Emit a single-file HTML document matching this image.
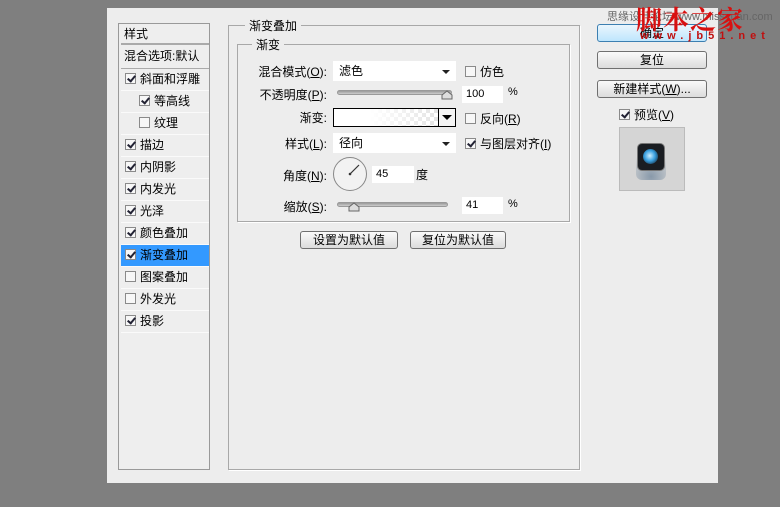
<!DOCTYPE html>
<html><head><meta charset="utf-8"><style>
*{margin:0;padding:0;box-sizing:border-box}
body{width:780px;height:507px;background:#7f7f7f;position:relative;overflow:hidden;font-family:"Liberation Sans","Noto Sans CJK SC",sans-serif;font-size:12px;color:#000}
.a{position:absolute}
.dlg{left:107px;top:8px;width:611px;height:475px;background:#ededed}
.lp{left:118px;top:23px;width:92px;height:447px;border:1px solid #999;background:#eeeeee}
.row{position:absolute;left:2px;width:88px;height:22px;line-height:21px;border-bottom:1px solid #fafafa;font-size:12px}
.cb{display:inline-block;width:11px;height:11px;border:1px solid #8a8a8a;background:#f7f7f7;vertical-align:-1px;margin-right:4px;position:relative}
.cb.on::after{content:"";position:absolute;left:3px;top:0px;width:3px;height:6px;border:solid #223;border-width:0 2px 2px 0;transform:rotate(40deg)}
.grp{border:1px solid #a8a8a8;box-shadow:1px 1px 0 #fff}
.gt{position:absolute;background:#ededed;padding:0 4px;font-size:12px}
.lbl{position:absolute;text-align:right;width:90px;font-size:12px}
.dd{position:absolute;background:#fff;height:20px;line-height:20px;padding-left:6px}
.dd::after{content:"";position:absolute;right:6px;top:9px;border:4px solid transparent;border-top:4px solid #222}
.inp{position:absolute;background:#fff;height:17px;line-height:17px;padding-left:4px;font-size:11px}
.sl{position:absolute;height:5px;border-radius:3px;background:linear-gradient(#999,#ccc);border:1px solid #999}
.th{position:absolute;width:10px;height:9px;}
.btn{position:absolute;height:18px;border:1px solid #707070;border-radius:3px;background:linear-gradient(#fafafa,#dcdcdc);text-align:center;line-height:16px;font-size:12px}
</style></head><body>
<div class="a dlg"></div>
<div class="a lp">
<div class="row" style="top:0;height:21px;border-bottom:2px solid #aaa;padding-left:3px">样式</div>
<div class="row" style="top:22px;height:23px;border-bottom:1px solid #aaa;padding-left:3px">混合选项:默认</div>
<div class="row" style="top:45px;padding-left:4px"><span class="cb on"></span>斜面和浮雕</div>
<div class="row" style="top:67px;padding-left:18px"><span class="cb on"></span>等高线</div>
<div class="row" style="top:89px;padding-left:18px"><span class="cb"></span>纹理</div>
<div class="row" style="top:111px;padding-left:4px"><span class="cb on"></span>描边</div>
<div class="row" style="top:133px;padding-left:4px"><span class="cb on"></span>内阴影</div>
<div class="row" style="top:155px;padding-left:4px"><span class="cb on"></span>内发光</div>
<div class="row" style="top:177px;padding-left:4px"><span class="cb on"></span>光泽</div>
<div class="row" style="top:199px;padding-left:4px"><span class="cb on"></span>颜色叠加</div>
<div class="row" style="top:221px;padding-left:4px;background:#3399ff"><span class="cb on"></span>渐变叠加</div>
<div class="row" style="top:243px;padding-left:4px"><span class="cb"></span>图案叠加</div>
<div class="row" style="top:265px;padding-left:4px"><span class="cb"></span>外发光</div>
<div class="row" style="top:287px;padding-left:4px"><span class="cb on"></span>投影</div>
</div>
<div class="a grp" style="left:228px;top:25px;width:352px;height:445px"></div>
<div class="gt" style="left:245px;top:17px">渐变叠加</div>
<div class="a grp" style="left:237px;top:44px;width:333px;height:178px"></div>
<div class="gt" style="left:252px;top:36px">渐变</div>
<div class="lbl" style="left:237px;top:63px">混合模式(<u>O</u>):</div>
<div class="dd" style="left:333px;top:61px;width:123px">滤色</div>
<div class="a" style="left:465px;top:63px"><span class="cb"></span>仿色</div>
<div class="lbl" style="left:237px;top:86px">不透明度(<u>P</u>):</div>
<div class="sl" style="left:337px;top:90px;width:115px"></div>
<svg class="a" style="left:441px;top:90px" width="12" height="10"><path d="M1 9V5L6 1L11 5V9Z" fill="#ddd" stroke="#666"/></svg>
<div class="inp" style="left:462px;top:86px;width:41px">100</div>
<div class="a" style="left:508px;top:86px;font-size:11px">%</div>
<div class="lbl" style="left:237px;top:109px">渐变:</div>
<div class="a" style="left:333px;top:108px;width:123px;height:19px;border:1px solid #000;background:linear-gradient(90deg,#fff 30%,rgba(255,255,255,0)),repeating-conic-gradient(#ddd 0 25%,#fff 0 50%) 0 0/8px 8px"></div>
<div class="a" style="left:438px;top:108px;width:18px;height:19px;border:1px solid #000;background:#f4f4f4"></div>
<div class="a" style="left:442px;top:115px;border:5px solid transparent;border-top:5px solid #000"></div>
<div class="a" style="left:465px;top:110px"><span class="cb"></span>反向(<u>R</u>)</div>
<div class="lbl" style="left:237px;top:135px">样式(<u>L</u>):</div>
<div class="dd" style="left:333px;top:133px;width:123px">径向</div>
<div class="a" style="left:465px;top:135px"><span class="cb on"></span>与图层对齐(<u>I</u>)</div>
<div class="lbl" style="left:237px;top:167px">角度(<u>N</u>):</div>
<svg class="a" style="left:332px;top:156px" width="36" height="36"><circle cx="18" cy="18" r="16.5" fill="#f2f2f2" stroke="#888"/><line x1="18" y1="18" x2="27" y2="9" stroke="#333" stroke-width="1.2"/><circle cx="18" cy="18" r="1.3" fill="#333"/></svg>
<div class="inp" style="left:372px;top:166px;width:42px">45</div>
<div class="a" style="left:416px;top:166px">度</div>
<div class="lbl" style="left:237px;top:198px">缩放(<u>S</u>):</div>
<div class="sl" style="left:337px;top:202px;width:111px"></div>
<svg class="a" style="left:348px;top:202px" width="12" height="10"><path d="M1 9V5L6 1L11 5V9Z" fill="#ddd" stroke="#666"/></svg>
<div class="inp" style="left:462px;top:197px;width:41px">41</div>
<div class="a" style="left:508px;top:198px;font-size:11px">%</div>
<div class="btn" style="left:300px;top:231px;width:98px">设置为默认值</div>
<div class="btn" style="left:410px;top:231px;width:96px">复位为默认值</div>
<div class="btn" style="left:597px;top:24px;width:110px;border-color:#3c7fb1;background:linear-gradient(#eaf6fd,#bee6fd)">确定</div>
<div class="btn" style="left:597px;top:51px;width:110px">复位</div>
<div class="btn" style="left:597px;top:80px;width:110px">新建样式(<u>W</u>)...</div>
<div class="a" style="left:619px;top:106px"><span class="cb on"></span>预览(<u>V</u>)</div>
<div class="a" style="left:619px;top:127px;width:66px;height:64px;border:1px solid #bbb;background:#d5d5d5"></div>
<div class="a" style="left:636px;top:145px;width:30px;height:35px;border-radius:6px;background:radial-gradient(circle at 50% 90%,#8899aa,rgba(200,200,210,0) 70%)"></div>
<div class="a" style="left:637px;top:143px;width:28px;height:28px;border-radius:5px;background:#1a1d22;border:1px solid #777"></div>
<div class="a" style="left:643px;top:149px;width:15px;height:15px;border-radius:50%;background:radial-gradient(circle at 45% 45%,#cfefff,#3aa0e0 45%,#123 90%)"></div>
<div class="a" style="left:607px;top:8px;font-size:11px;color:#666">思缘设计论坛 www.missyuan.com</div>
<div class="a" style="left:636px;top:0px;font-size:26px;color:#d81010;font-family:'Noto Serif CJK SC',serif;font-weight:bold;letter-spacing:1px">脚本之家</div>
<div class="a" style="left:640px;top:30px;font-size:11px;color:#c01010;letter-spacing:5px;font-weight:bold">www.jb51.net</div>
</body></html>
